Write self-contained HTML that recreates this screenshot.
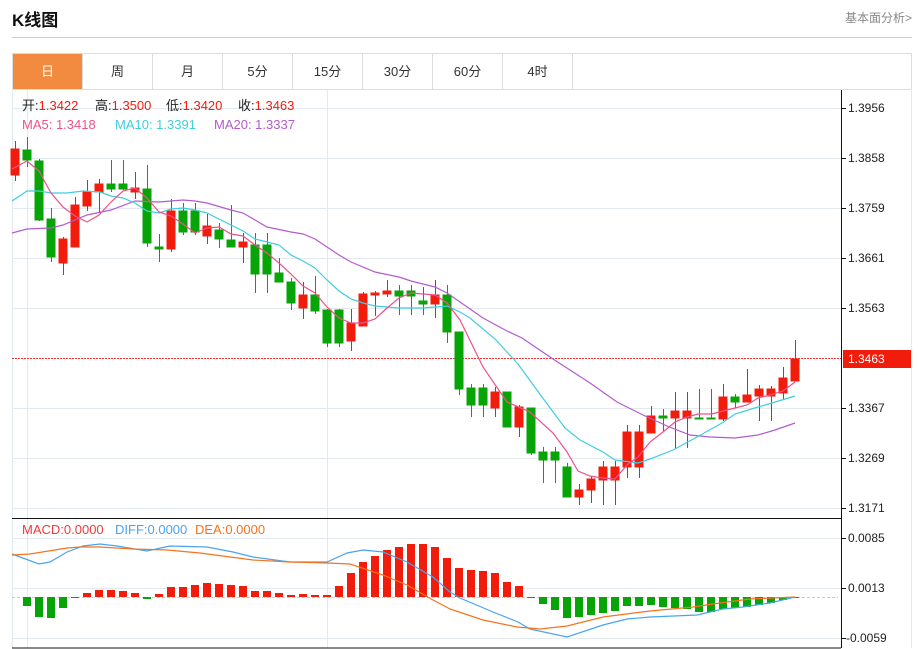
<!DOCTYPE html>
<html><head><meta charset="utf-8"><style>
body{margin:0;background:#fff;width:918px;height:649px;overflow:hidden;font-family:"Liberation Sans","Noto Sans CJK SC",sans-serif}
.t{position:absolute;left:12px;top:6px;font-size:17px;font-weight:bold;color:#111}
.r{position:absolute;right:6px;top:9px;font-size:12px;color:#888}
.hl{position:absolute;left:12px;top:37px;width:900px;height:1px;background:#ccc}
.tabs{position:absolute;left:12px;top:53px;width:898px;height:35px;border:1px solid #ddd;display:flex}
.tabs div{width:69px;border-right:1px solid #ddd;text-align:center;line-height:35px;font-size:13px;color:#333}
.tabs div.a{background:#f28b3f;color:#fff}
svg{position:absolute;left:0;top:0}
</style></head><body>
<div class="t">K线图</div><div class="r">基本面分析&gt;</div><div class="hl"></div>
<div class="tabs"><div class="a">日</div><div>周</div><div>月</div><div>5分</div><div>15分</div><div>30分</div><div>60分</div><div>4时</div></div>
<svg width="918" height="649" font-family="Liberation Sans,Noto Sans CJK SC,sans-serif">
<g stroke="#e2eaf0" stroke-width="1">
<line x1="12" x2="841" y1="108.5" y2="108.5"/><line x1="12" x2="841" y1="158.5" y2="158.5"/><line x1="12" x2="841" y1="208.5" y2="208.5"/><line x1="12" x2="841" y1="258.5" y2="258.5"/><line x1="12" x2="841" y1="308.5" y2="308.5"/><line x1="12" x2="841" y1="408.5" y2="408.5"/><line x1="12" x2="841" y1="458.5" y2="458.5"/><line x1="12" x2="841" y1="508.5" y2="508.5"/>
<line x1="12" x2="841" y1="538.5" y2="538.5"/><line x1="12" x2="841" y1="588.5" y2="588.5"/><line x1="12" x2="841" y1="638.5" y2="638.5"/>
<line x1="27.5" x2="27.5" y1="90" y2="648"/><line x1="327.5" x2="327.5" y1="90" y2="648"/>
<line x1="12.5" x2="12.5" y1="89" y2="648"/><line x1="911.5" x2="911.5" y1="89" y2="648"/>
</g>
<line x1="12" x2="841" y1="518.5" y2="518.5" stroke="#111"/>
<line x1="12" x2="841" y1="648" y2="648" stroke="#111"/>
<line x1="841.5" x2="841.5" y1="90" y2="648" stroke="#111"/>
<g stroke="#111"><line x1="841" x2="846" y1="108.5" y2="108.5"/><line x1="841" x2="846" y1="158.5" y2="158.5"/><line x1="841" x2="846" y1="208.5" y2="208.5"/><line x1="841" x2="846" y1="258.5" y2="258.5"/><line x1="841" x2="846" y1="308.5" y2="308.5"/><line x1="841" x2="846" y1="408.5" y2="408.5"/><line x1="841" x2="846" y1="458.5" y2="458.5"/><line x1="841" x2="846" y1="508.5" y2="508.5"/><line x1="841" x2="846" y1="538.5" y2="538.5"/><line x1="841" x2="846" y1="588.5" y2="588.5"/><line x1="841" x2="846" y1="638.5" y2="638.5"/></g>
<g font-size="12" fill="#222">
<text x="848" y="112">1.3956</text><text x="848" y="162">1.3858</text><text x="848" y="212">1.3759</text><text x="848" y="262">1.3661</text><text x="848" y="312">1.3563</text><text x="848" y="412">1.3367</text><text x="848" y="462">1.3269</text><text x="848" y="512">1.3171</text>
<text x="848" y="542">0.0085</text><text x="848" y="592">0.0013</text><text x="846" y="642">-0.0059</text></g>
<rect x="843" y="350" width="68" height="18" fill="#f21c0c"/>
<text x="848" y="363" font-size="12" fill="#fff">1.3463</text>
<line x1="12" x2="841" y1="358.5" y2="358.5" stroke="#e33" stroke-dasharray="2,1"/>
<line x1="12" x2="838" y1="597.5" y2="597.5" stroke="#a8d8ea" stroke-dasharray="3,2"/>
<g font-size="13">
<text y="110" fill="#222"><tspan x="22">开:</tspan><tspan fill="#f21c0c">1.3422</tspan><tspan x="95">高:</tspan><tspan fill="#f21c0c">1.3500</tspan><tspan x="166">低:</tspan><tspan fill="#f21c0c">1.3420</tspan><tspan x="238">收:</tspan><tspan fill="#f21c0c">1.3463</tspan></text>
<text y="129"><tspan x="22" fill="#f0508a">MA5: 1.3418</tspan><tspan x="115" fill="#3fcde0">MA10: 1.3391</tspan><tspan x="214" fill="#b35ccc">MA20: 1.3337</tspan></text>
<text y="534"><tspan x="22" fill="#f03a3a">MACD:0.0000</tspan><tspan x="115" fill="#4aa3f0">DIFF:0.0000</tspan><tspan x="195" fill="#f5731e">DEA:0.0000</tspan></text>
</g>
<g stroke="#f21c0c" fill="#f21c0c">
<line x1="15.5" x2="15.5" y1="141" y2="181"/><rect x="11" y="149" width="8" height="26"/>
<line x1="63.5" x2="63.5" y1="237" y2="275"/><rect x="59" y="239" width="8" height="24"/>
<line x1="75.5" x2="75.5" y1="197" y2="247"/><rect x="71" y="205" width="8" height="42"/>
<line x1="87.5" x2="87.5" y1="180" y2="211"/><rect x="83" y="192" width="8" height="14"/>
<line x1="99.5" x2="99.5" y1="179" y2="213"/><rect x="95" y="184" width="8" height="8"/>
<line x1="135.5" x2="135.5" y1="172" y2="199"/><rect x="131" y="188" width="8" height="4"/>
<line x1="171.5" x2="171.5" y1="199" y2="252"/><rect x="167" y="211" width="8" height="38"/>
<line x1="207.5" x2="207.5" y1="214" y2="244"/><rect x="203" y="226" width="8" height="10"/>
<line x1="243.5" x2="243.5" y1="233" y2="263"/><rect x="239" y="242" width="8" height="5"/>
<line x1="303.5" x2="303.5" y1="282" y2="319"/><rect x="299" y="295" width="8" height="13"/>
<line x1="351.5" x2="351.5" y1="309" y2="351"/><rect x="347" y="323" width="8" height="18"/>
<line x1="363.5" x2="363.5" y1="292" y2="326"/><rect x="359" y="294" width="8" height="32"/>
<line x1="375.5" x2="375.5" y1="291" y2="316"/><rect x="371" y="293" width="8" height="2"/>
<line x1="387.5" x2="387.5" y1="280" y2="297"/><rect x="383" y="291" width="8" height="3"/>
<line x1="435.5" x2="435.5" y1="280" y2="318"/><rect x="431" y="295" width="8" height="9"/>
<line x1="495.5" x2="495.5" y1="387" y2="417"/><rect x="491" y="392" width="8" height="16"/>
<line x1="519.5" x2="519.5" y1="405" y2="437"/><rect x="515" y="407" width="8" height="20"/>
<line x1="579.5" x2="579.5" y1="484" y2="505"/><rect x="575" y="490" width="8" height="7"/>
<line x1="591.5" x2="591.5" y1="476" y2="503"/><rect x="587" y="479" width="8" height="11"/>
<line x1="603.5" x2="603.5" y1="461" y2="505"/><rect x="599" y="467" width="8" height="13"/>
<line x1="615.5" x2="615.5" y1="461" y2="505"/><rect x="611" y="467" width="8" height="13"/>
<line x1="627.5" x2="627.5" y1="425" y2="478"/><rect x="623" y="432" width="8" height="35"/>
<line x1="639.5" x2="639.5" y1="425" y2="478"/><rect x="635" y="432" width="8" height="35"/>
<line x1="651.5" x2="651.5" y1="406" y2="433"/><rect x="647" y="416" width="8" height="17"/>
<line x1="675.5" x2="675.5" y1="392" y2="449"/><rect x="671" y="411" width="8" height="7"/>
<line x1="687.5" x2="687.5" y1="392" y2="448"/><rect x="683" y="411" width="8" height="7"/>
<line x1="723.5" x2="723.5" y1="384" y2="421"/><rect x="719" y="397" width="8" height="22"/>
<line x1="747.5" x2="747.5" y1="369" y2="402"/><rect x="743" y="395" width="8" height="7"/>
<line x1="759.5" x2="759.5" y1="385" y2="421"/><rect x="755" y="389" width="8" height="7"/>
<line x1="771.5" x2="771.5" y1="386" y2="421"/><rect x="767" y="389" width="8" height="7"/>
<line x1="783.5" x2="783.5" y1="367" y2="400"/><rect x="779" y="378" width="8" height="15"/>
<line x1="795.5" x2="795.5" y1="340" y2="381"/><rect x="791" y="359" width="8" height="22"/>
</g>
<g stroke="#06a406" fill="#06a406">
<line x1="27.5" x2="27.5" y1="137" y2="167"/><rect x="23" y="150" width="8" height="10"/>
<line x1="39.5" x2="39.5" y1="159" y2="221"/><rect x="35" y="161" width="8" height="59"/>
<line x1="51.5" x2="51.5" y1="208" y2="262"/><rect x="47" y="219" width="8" height="38"/>
<line x1="111.5" x2="111.5" y1="160" y2="192"/><rect x="107" y="184" width="8" height="5"/>
<line x1="123.5" x2="123.5" y1="160" y2="190"/><rect x="119" y="184" width="8" height="5"/>
<line x1="147.5" x2="147.5" y1="165" y2="247"/><rect x="143" y="189" width="8" height="54"/>
<line x1="159.5" x2="159.5" y1="234" y2="262"/><rect x="155" y="247" width="8" height="2"/>
<line x1="183.5" x2="183.5" y1="203" y2="235"/><rect x="179" y="211" width="8" height="21"/>
<line x1="195.5" x2="195.5" y1="203" y2="235"/><rect x="191" y="211" width="8" height="21"/>
<line x1="219.5" x2="219.5" y1="223" y2="248"/><rect x="215" y="230" width="8" height="9"/>
<line x1="231.5" x2="231.5" y1="205" y2="247"/><rect x="227" y="240" width="8" height="7"/>
<line x1="255.5" x2="255.5" y1="233" y2="293"/><rect x="251" y="245" width="8" height="29"/>
<line x1="267.5" x2="267.5" y1="233" y2="293"/><rect x="263" y="245" width="8" height="29"/>
<line x1="279.5" x2="279.5" y1="258" y2="282"/><rect x="275" y="273" width="8" height="9"/>
<line x1="291.5" x2="291.5" y1="278" y2="310"/><rect x="287" y="282" width="8" height="21"/>
<line x1="315.5" x2="315.5" y1="276" y2="314"/><rect x="311" y="295" width="8" height="16"/>
<line x1="327.5" x2="327.5" y1="309" y2="347"/><rect x="323" y="310" width="8" height="33"/>
<line x1="339.5" x2="339.5" y1="309" y2="347"/><rect x="335" y="310" width="8" height="33"/>
<line x1="399.5" x2="399.5" y1="285" y2="315"/><rect x="395" y="291" width="8" height="5"/>
<line x1="411.5" x2="411.5" y1="285" y2="315"/><rect x="407" y="291" width="8" height="5"/>
<line x1="423.5" x2="423.5" y1="287" y2="315"/><rect x="419" y="301" width="8" height="3"/>
<line x1="447.5" x2="447.5" y1="285" y2="343"/><rect x="443" y="295" width="8" height="37"/>
<line x1="459.5" x2="459.5" y1="332" y2="395"/><rect x="455" y="332" width="8" height="57"/>
<line x1="471.5" x2="471.5" y1="384" y2="417"/><rect x="467" y="388" width="8" height="17"/>
<line x1="483.5" x2="483.5" y1="384" y2="417"/><rect x="479" y="388" width="8" height="17"/>
<line x1="507.5" x2="507.5" y1="392" y2="427"/><rect x="503" y="392" width="8" height="35"/>
<line x1="531.5" x2="531.5" y1="408" y2="455"/><rect x="527" y="408" width="8" height="45"/>
<line x1="543.5" x2="543.5" y1="447" y2="483"/><rect x="539" y="452" width="8" height="8"/>
<line x1="555.5" x2="555.5" y1="447" y2="483"/><rect x="551" y="452" width="8" height="8"/>
<line x1="567.5" x2="567.5" y1="463" y2="497"/><rect x="563" y="467" width="8" height="30"/>
<line x1="663.5" x2="663.5" y1="409" y2="432"/><rect x="659" y="416" width="8" height="2"/>
<line x1="699.5" x2="699.5" y1="389" y2="419"/><rect x="695" y="418" width="8" height="1"/>
<line x1="711.5" x2="711.5" y1="389" y2="419"/><rect x="707" y="418" width="8" height="1"/>
<line x1="735.5" x2="735.5" y1="394" y2="408"/><rect x="731" y="397" width="8" height="5"/>
</g>
<g fill="none" stroke-width="1.2">
<polyline stroke="#b35ccc" points="12,233 27,229 51,228 63,225 87,215 111,210 135,201 159,202 183,200 195,201 207,203 231,210 243,213 255,220 267,227 291,232 303,234 315,239 327,247 339,255 351,262 375,272 399,277 411,281 423,284 435,287 447,293 460,302 483,318 507,331 522,338 553,359 590,383 617,402 643,415 667,426 690,435 710,437 735,438 758,435 775,430 795,423"/>
<polyline stroke="#3fcde0" points="12,201 27,191 39,191 51,193 67,193 83,191 100,192 111,196 123,198 135,203 147,211 159,213 171,209 183,208 195,210 207,213 219,219 231,225 243,231 255,239 267,242 279,245 291,255 303,261 315,268 327,280 339,291 351,299 363,303 375,306 387,307 399,308 423,308 435,307 447,306 460,312 470,318 495,339 518,364 542,397 565,428 580,440 603,452 615,460 638,463 650,459 673,450 697,437 722,423 735,414 758,407 772,403 795,396"/>
<polyline stroke="#f0508a" points="12,169 27,161 39,171 51,193 63,207 75,216 87,222 99,215 111,202 123,191 135,188 147,198 159,212 171,216 183,224 195,233 207,228 219,227 231,234 243,236 255,245 267,253 279,263 291,274 303,286 315,293 327,307 339,318 351,323 363,323 375,319 387,308 399,298 411,293 423,294 435,295 447,303 460,320 483,367 507,402 530,412 553,433 567,452 578,471 590,476 603,478 615,479 627,465 638,457 650,442 663,432 675,422 687,417 698,414 712,414 723,411 735,408 747,405 758,398 770,395 783,391 795,382"/>
</g>
<g fill="#f21c0c">
<rect x="83" y="593" width="8" height="4"/><rect x="95" y="590" width="8" height="7"/><rect x="107" y="590" width="8" height="7"/><rect x="119" y="591" width="8" height="6"/><rect x="131" y="593" width="8" height="4"/>
<rect x="155" y="594" width="8" height="3"/><rect x="167" y="587" width="8" height="10"/><rect x="179" y="587" width="8" height="10"/><rect x="191" y="585" width="8" height="12"/><rect x="203" y="583" width="8" height="14"/><rect x="215" y="584" width="8" height="13"/><rect x="227" y="585" width="8" height="12"/><rect x="239" y="586" width="8" height="11"/><rect x="251" y="591" width="8" height="6"/><rect x="263" y="591" width="8" height="6"/><rect x="275" y="593" width="8" height="4"/><rect x="287" y="595" width="8" height="2"/><rect x="299" y="594" width="8" height="3"/><rect x="311" y="595" width="8" height="2"/><rect x="323" y="595" width="8" height="2"/>
<rect x="335" y="586" width="8" height="11"/><rect x="347" y="573" width="8" height="24"/><rect x="359" y="562" width="8" height="35"/><rect x="371" y="556" width="8" height="41"/><rect x="383" y="550" width="8" height="47"/><rect x="395" y="547" width="8" height="50"/><rect x="407" y="544" width="8" height="53"/><rect x="419" y="544" width="8" height="53"/><rect x="431" y="547" width="8" height="50"/><rect x="443" y="558" width="8" height="39"/><rect x="455" y="568" width="8" height="29"/><rect x="467" y="570" width="8" height="27"/><rect x="479" y="571" width="8" height="26"/><rect x="491" y="573" width="8" height="24"/><rect x="503" y="582" width="8" height="15"/><rect x="515" y="586" width="8" height="11"/>
</g>
<g fill="#06a406">
<rect x="23" y="597" width="8" height="9"/><rect x="35" y="597" width="8" height="20"/><rect x="47" y="597" width="8" height="21"/><rect x="59" y="597" width="8" height="11"/><rect x="71" y="597" width="8" height="1"/><rect x="143" y="597" width="8" height="2"/>
<rect x="527" y="597" width="8" height="1"/><rect x="539" y="597" width="8" height="7"/><rect x="551" y="597" width="8" height="13"/><rect x="563" y="597" width="8" height="21"/><rect x="575" y="597" width="8" height="20"/><rect x="587" y="597" width="8" height="18"/><rect x="599" y="597" width="8" height="16"/><rect x="611" y="597" width="8" height="14"/><rect x="623" y="597" width="8" height="9"/><rect x="635" y="597" width="8" height="9"/><rect x="647" y="597" width="8" height="8"/><rect x="659" y="597" width="8" height="10"/><rect x="671" y="597" width="8" height="11"/><rect x="683" y="597" width="8" height="12"/><rect x="695" y="597" width="8" height="15"/><rect x="707" y="597" width="8" height="15"/><rect x="719" y="597" width="8" height="12"/><rect x="731" y="597" width="8" height="11"/><rect x="743" y="597" width="8" height="10"/><rect x="755" y="597" width="8" height="8"/><rect x="767" y="597" width="8" height="6"/><rect x="779" y="597" width="8" height="3"/><rect x="791" y="597" width="8" height="1"/>
</g>
<g fill="none" stroke-width="1.2">
<polyline stroke="#4aa3f0" points="12,554 39,564 50,562 67,552 83,546 100,544 117,546 147,551 170,546 207,547 233,552 253,557 290,562 327,562 347,553 363,550 383,552 407,562 433,577 450,592 460,598 493,612 518,622 530,629 567,637 603,625 627,619 650,617 697,615 723,609 743,607 770,603 795,597"/>
<polyline stroke="#f5731e" points="12,555 30,554 67,548 80,547 100,547 133,549 167,550 200,553 253,560 290,562 327,563 350,564 383,575 407,585 433,600 450,609 483,620 517,627 540,629 567,626 603,617 650,611 693,607 720,603 750,599 795,597"/>
</g>
</svg>
</body></html>
